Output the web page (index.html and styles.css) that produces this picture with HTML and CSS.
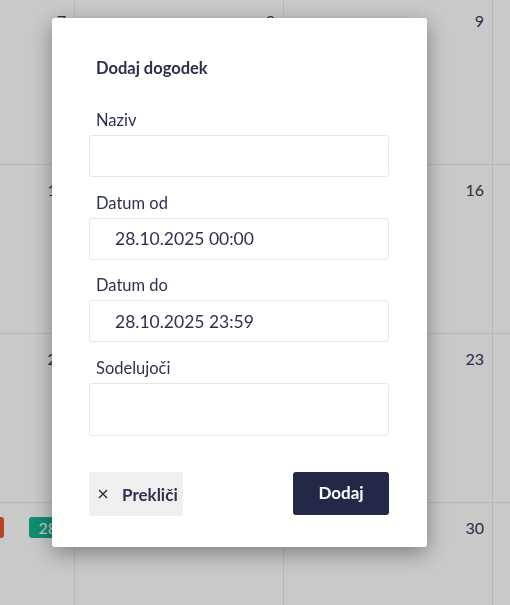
FILE: index.html
```html
<!DOCTYPE html>
<html lang="sl">
<head>
<meta charset="utf-8">
<title>Dodaj dogodek</title>
<link rel="stylesheet" href="styles.css">
</head>
<body>
<div class="calendar-wrap">
  <div class="calendar">
    <div class="cell"><div class="day-head"><span class="day">7</span></div></div>
    <div class="cell"><div class="day-head"><span class="day">8</span></div></div>
    <div class="cell"><div class="day-head"><span class="day">9</span></div></div>
    <div class="cell"></div>
    <div class="cell"><div class="day-head"><span class="day">14</span></div></div>
    <div class="cell"><div class="day-head"><span class="day">15</span></div></div>
    <div class="cell"><div class="day-head"><span class="day">16</span></div></div>
    <div class="cell"></div>
    <div class="cell"><div class="day-head"><span class="day">21</span></div></div>
    <div class="cell"><div class="day-head"><span class="day">22</span></div></div>
    <div class="cell"><div class="day-head"><span class="day">23</span></div></div>
    <div class="cell"></div>
    <div class="cell"><div class="day-head"><span class="chip chip-red"></span><span class="day day-today">28</span></div></div>
    <div class="cell"><div class="day-head"><span class="day">29</span></div></div>
    <div class="cell"><div class="day-head"><span class="day">30</span></div></div>
    <div class="cell"></div>
  </div>
</div>
<div class="overlay"></div>
<div class="modal">
  <h2 class="modal-title">Dodaj dogodek</h2>
  <div class="field">
    <label class="label">Naziv</label>
    <div class="input"></div>
  </div>
  <div class="field">
    <label class="label">Datum od</label>
    <div class="input">28.10.2025 00:00</div>
  </div>
  <div class="field">
    <label class="label">Datum do</label>
    <div class="input">28.10.2025 23:59</div>
  </div>
  <div class="field">
    <label class="label">Sodelujoči</label>
    <div class="input input-area"></div>
  </div>
  <div class="actions">
    <button class="btn btn-cancel"><svg class="x-icon" width="10" height="10" viewBox="0 0 10 10"><path d="M1 1L9 9M9 1L1 9" stroke="#2b2b2b" stroke-width="1.4" fill="none"/></svg>Prekliči</button>
    <button class="btn btn-primary">Dodaj</button>
  </div>
</div>
</body>
</html>
```
FILE: styles.css
```css
html, body {
  margin: 0;
  padding: 0;
  height: 100%;
  overflow: hidden;
  background: #fff;
  font-family: Lato, "Noto Sans", sans-serif;
  color: #2d3250;
}

.calendar-wrap {
  height: 100vh;
  width: 100vw;
  overflow: hidden;
}

.calendar {
  display: grid;
  grid-template-columns: repeat(4, 209px);
  grid-auto-rows: 169px;
  margin: -4px 0 0 -134px;
}

.cell {
  border-right: 1px solid #eaeaea;
  border-bottom: 1px solid #eaeaea;
  box-sizing: border-box;
}

.day-head {
  display: flex;
  justify-content: flex-end;
  align-items: center;
  gap: 25px;
  padding: 13px 8px 0 0;
  height: 22px;
}

.day {
  font-size: 16px;
  color: #363b5a;
}

.day-today {
  background: #11b592;
  color: #fff;
  padding: 0 9px;
  height: 21px;
  line-height: 21px;
  border-radius: 3px;
}

.chip {
  height: 21px;
  width: 30px;
  border-radius: 3px;
}

.chip-red {
  background: #e8532f;
}

.overlay {
  position: fixed;
  inset: 0;
  background: rgba(0, 0, 0, 0.21);
}

.modal {
  position: fixed;
  top: 18px;
  left: 52px;
  width: 375px;
  height: 529px;
  box-sizing: border-box;
  background: #fff;
  border-radius: 3px;
  box-shadow: 0 6px 22px rgba(0, 0, 0, 0.38);
  padding: 40px 38px 31px 37px;
  display: flex;
  flex-direction: column;
}

.modal-title {
  margin: 0 0 32px;
  padding-left: 7px;
  font-size: 16.5px;
  line-height: 20px;
  font-weight: 700;
  color: #2a2f4c;
}

.field {
  display: flex;
  flex-direction: column;
  margin-bottom: 15.5px;
}

.label {
  padding-left: 7px;
  font-size: 16.5px;
  line-height: 20px;
  margin-bottom: 5px;
  color: #2d3250;
}

.input {
  height: 42px;
  box-sizing: border-box;
  border: 1px solid #e6e6e6;
  border-radius: 3px;
  padding: 0 25px;
  display: flex;
  align-items: center;
  font-size: 17.5px;
  color: #2d3250;
}

.input-area {
  height: 53px;
}

.actions {
  margin-top: auto;
  display: flex;
  justify-content: space-between;
  align-items: flex-start;
}

.btn {
  border: none;
  border-radius: 3px;
  font-family: inherit;
  font-weight: 700;
  font-size: 17px;
  display: flex;
  align-items: center;
  cursor: pointer;
}

.btn-cancel {
  height: 44px;
  width: 94px;
  background: #efefef;
  color: #2d3250;
  padding: 0 0 0 9px;
  gap: 14px;
}

.x-icon {
  flex: none;
}

.btn-primary {
  height: 43px;
  width: 96px;
  justify-content: center;
  background: #222845;
  color: #fff;
  padding: 0 0 2px;
}
```
